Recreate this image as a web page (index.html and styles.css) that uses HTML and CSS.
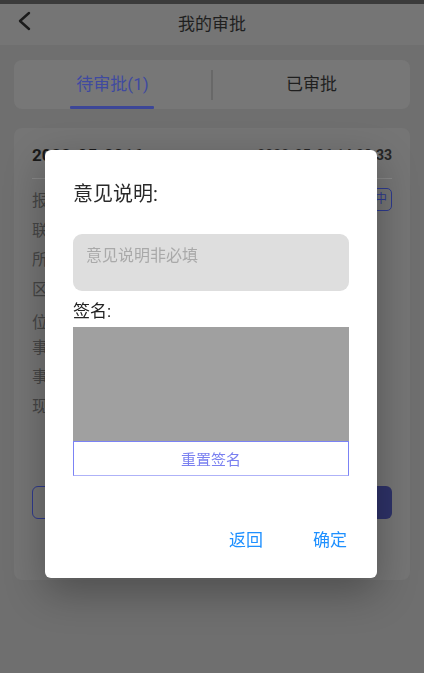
FILE: index.html
```html
<!DOCTYPE html>
<html lang="zh-CN">
<head>
    <meta charset="UTF-8">
    <meta name="viewport" content="width=device-width, initial-scale=1.0">
    <title>我的审批</title>
    <link rel="stylesheet" href="styles.css">
</head>
<body>

    <div class="status-bar"></div>

    <header class="nav-bar">
        <span class="back-btn">
            <svg width="14" height="20" viewBox="0 0 14 20">
                <polyline points="11,2 2,10 11,18" fill="none" stroke="#1b1b1b" stroke-width="2.4" stroke-linecap="round" stroke-linejoin="round"/>
            </svg>
        </span>
        <h1 class="nav-title">我的审批</h1>
    </header>

    <div class="tabs">
        <div class="tab active">待审批(1)</div>
        <div class="tab-sep"></div>
        <div class="tab">已审批</div>
    </div>

    <div class="card">
        <div class="card-head">
            <span class="card-no">2022-05-0016</span>
            <span class="card-time">2022-05-06 14:08:33</span>
        </div>
        <div class="card-body">
            <div class="row">报修人 <span class="tag">审批中</span></div>
            <div class="row">联系电话</div>
            <div class="row">所属单位</div>
            <div class="row">区域</div>
            <div class="row row-wide">位置</div>
            <div class="row row-tight">事项类型</div>
            <div class="row">事项描述</div>
            <div class="row">现场照片</div>
        </div>
        <div class="card-actions">
            <button class="btn btn-outline">驳回</button>
            <button class="btn btn-fill">通过</button>
        </div>
    </div>

    <div class="dialog">
        <h2 class="dialog-title">意见说明:</h2>
        <textarea class="opinion" placeholder="意见说明非必填"></textarea>
        <div class="sign-label">签名:</div>
        <div class="sign-pad"></div>
        <button class="sign-reset">重置签名</button>
        <div class="dialog-footer">
            <span class="dialog-btn">返回</span>
            <span class="dialog-btn">确定</span>
        </div>
    </div>

</body>
</html>
```

FILE: styles.css
```css
/* Page (dimmed under dialog mask) */
body {
    margin: 0;
    background: #6f6f6f;
    font-family: Roboto, "Noto Sans CJK SC", sans-serif;
    color: #1e1e1e;
}

.status-bar {
    height: 4px;
    background: #3b3b3b;
}

.nav-bar {
    height: 41px;
    background: #757575;
    display: flex;
    align-items: center;
    justify-content: center;
    padding-bottom: 5px;
    box-sizing: border-box;
    position: relative;
}

.back-btn {
    position: absolute;
    left: 18px;
    top: 7px;
    display: flex;
}

.nav-title {
    margin: 0;
    font-size: 17px;
    font-weight: normal;
    color: #1f1f1f;
}

.tabs {
    margin: 15px 14px 0;
    height: 49px;
    background: #777;
    border-radius: 8px;
    display: flex;
    align-items: center;
}

.tab {
    flex: 1;
    text-align: center;
    font-size: 17px;
    color: #1f1f1f;
    height: 49px;
    line-height: 49px;
    box-sizing: border-box;
    position: relative;
}

.tab.active {
    color: #3f4aa0;
}

.tab.active::after {
    content: "";
    position: absolute;
    left: 50%;
    bottom: 0;
    width: 84px;
    height: 3px;
    margin-left: -43px;
    background: #3c4697;
    border-radius: 1px;
}

.tab-sep {
    width: 2px;
    height: 30px;
    background: #686868;
}

.card {
    margin: 19px 14px 0;
    height: 452px;
    background: #757575;
    border-radius: 8px;
    padding: 0 18px;
    box-sizing: border-box;
    display: flex;
    flex-direction: column;
}

.card-head {
    height: 51px;
    display: flex;
    justify-content: space-between;
    align-items: center;
    padding-top: 3px;
    border-bottom: 1px solid #878787;
    box-sizing: border-box;
}

.card-no {
    font-size: 17px;
    font-weight: bold;
    color: #1a1a1a;
}

.card-time {
    font-size: 14px;
    font-weight: bold;
    color: #262626;
}

.card-body {
    padding-top: 7px;
}

.row {
    font-size: 16px;
    line-height: 29.5px;
    color: #464646;
    position: relative;
}

.row-wide {
    margin-top: 4px;
}

.row-tight {
    margin-top: -5px;
}

.tag {
    position: absolute;
    right: 0;
    top: 2px;
    height: 21px;
    line-height: 21px;
    padding: 0 4px;
    font-size: 12px;
    color: #2d3a8f;
    border: 1.5px solid #2d3a8f;
    border-radius: 5px;
}

.card-actions {
    display: flex;
    gap: 14px;
    margin-top: 65px;
}

.btn {
    flex: 1;
    height: 33px;
    border-radius: 6px;
    font-family: inherit;
    font-size: 15px;
}

.btn-outline {
    background: transparent;
    border: 1px solid #2f3a8c;
    color: #2f3a8c;
}

.btn-fill {
    background: #2e3268;
    border: none;
    color: #777;
}

/* Dialog */
.dialog {
    position: fixed;
    left: 45px;
    top: 150px;
    width: 332px;
    background: #fff;
    border-radius: 6px;
    padding: 30px 28px 26px;
    box-sizing: border-box;
    box-shadow: 0 14px 40px rgba(0, 0, 0, 0.3);
}

.dialog-title {
    margin: 0;
    font-size: 20px;
    line-height: 28px;
    font-weight: normal;
    color: #2a2a2a;
}

.opinion {
    display: block;
    margin-top: 26px;
    width: 100%;
    height: 57px;
    border: none;
    border-radius: 9px;
    background: #dedede;
    padding: 11px 13px;
    box-sizing: border-box;
    font-family: inherit;
    font-size: 16px;
    line-height: 22px;
    resize: none;
    outline: none;
}

.opinion::placeholder {
    color: #a9a9a9;
}

.sign-label {
    margin-top: 8px;
    font-size: 17px;
    line-height: 24px;
    color: #222;
}

.sign-pad {
    margin-top: 4px;
    height: 114px;
    background: #a0a0a0;
}

.sign-reset {
    display: block;
    width: 100%;
    height: 35px;
    background: #fff;
    border: 1px solid #7b83f5;
    border-bottom-color: #aeb2f8;
    font-family: inherit;
    font-size: 15px;
    color: #7a80f0;
}

.dialog-footer {
    margin-top: 52px;
    display: flex;
    justify-content: flex-end;
    gap: 50px;
    padding-right: 2px;
}

.dialog-btn {
    font-size: 17px;
    line-height: 24px;
    color: #1e90ff;
}
```
